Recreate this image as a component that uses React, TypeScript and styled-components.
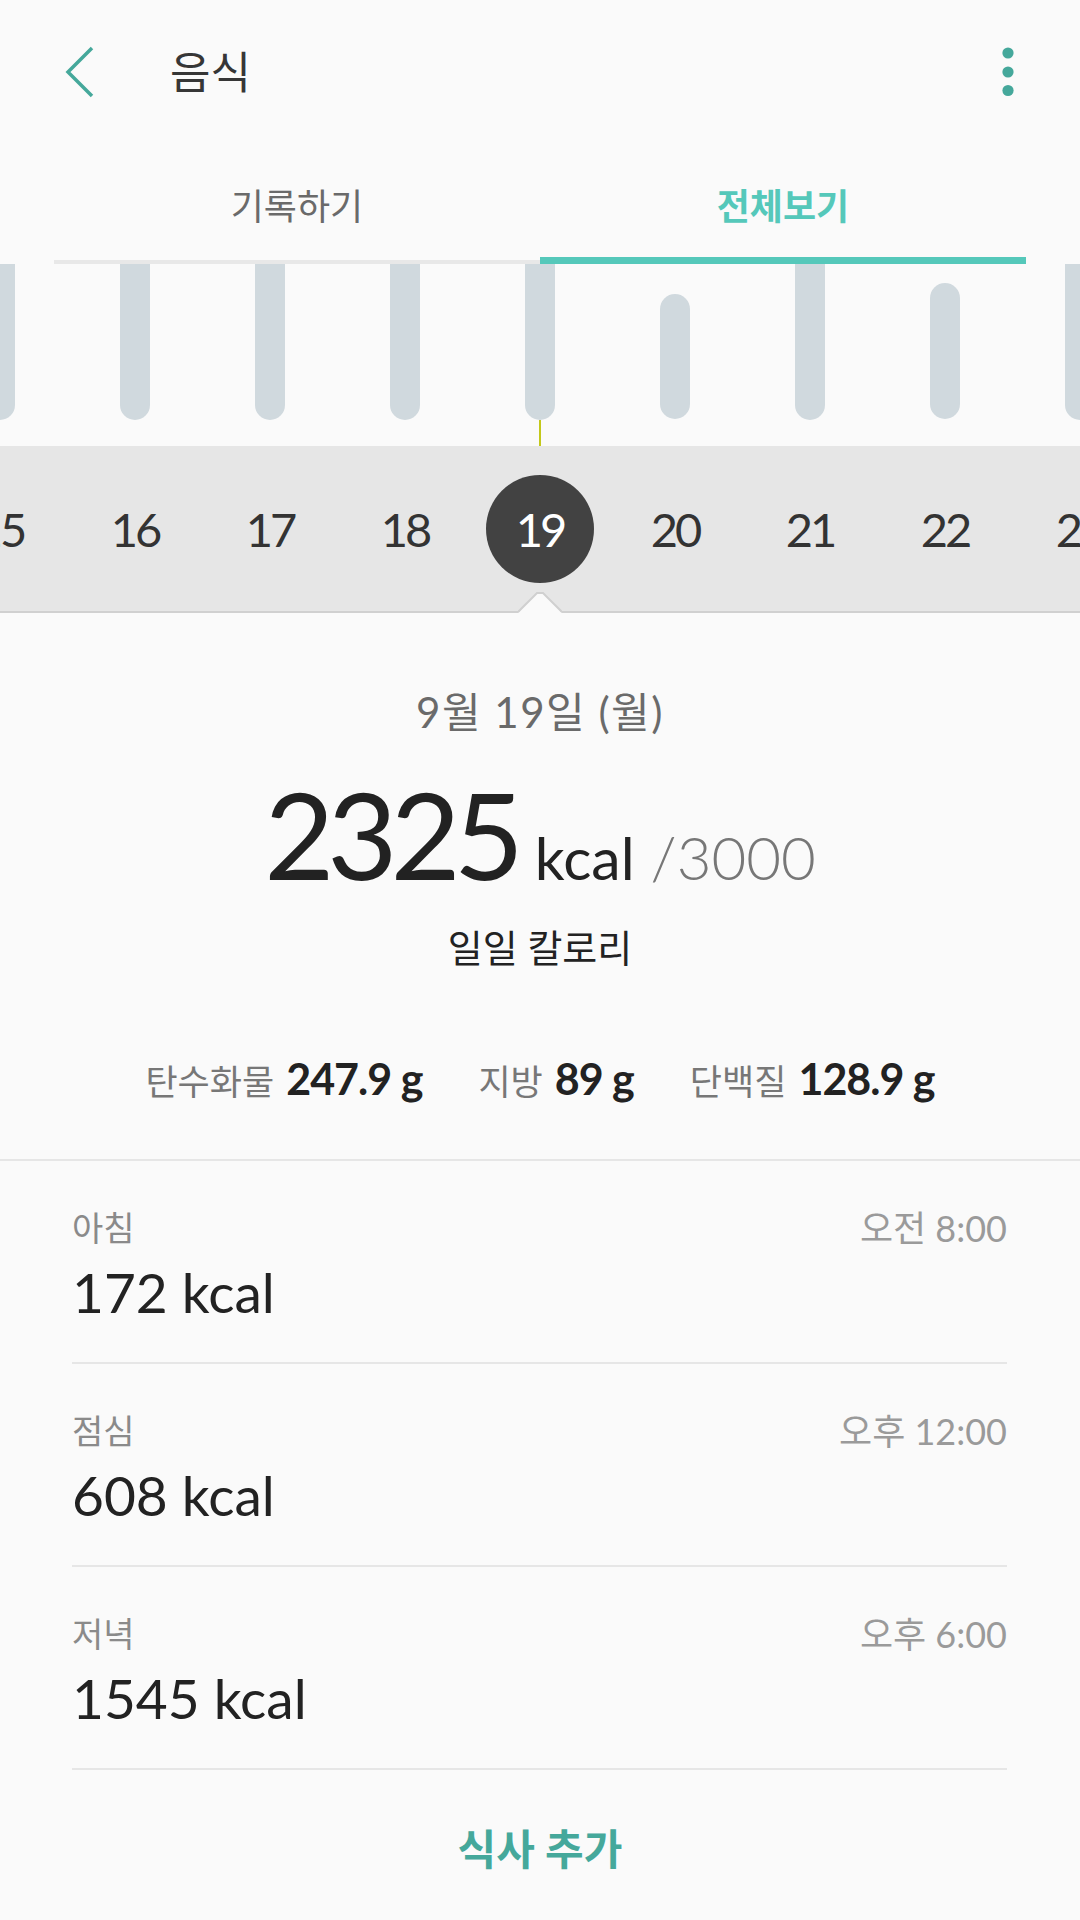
import React from 'react';
import styled, { createGlobalStyle } from 'styled-components';

const TEAL = '#45a89b';
const TEAL_BAR = '#55c8ba';
const FONT = `"Lato", "Noto Sans CJK KR", sans-serif`;

const GlobalStyle = createGlobalStyle`
	html, body {
		margin: 0;
		padding: 0;
		background: #fafafa;
	}
	body {
		font-family: ${FONT};
		color: #222;
	}
	* {
		box-sizing: border-box;
	}
`;

const Screen = styled.div`
	width: 1080px;
	min-height: 1920px;
	background: #fafafa;
	overflow: hidden;
`;

/* header */
const Header = styled.header`
	height: 144px;
	display: flex;
	align-items: center;
	padding-left: 60px;
	padding-right: 66px;
`;

const BackButton = styled.div`
	width: 40px;
	height: 56px;
	display: flex;
	align-items: center;
	justify-content: center;
	svg {
		display: block;
	}
`;

const Title = styled.h1`
	margin: 0 0 0 70px;
	flex: 1;
	font-size: 44px;
	font-weight: 400;
	color: #363636;
	line-height: 56px;
`;

const MoreButton = styled.div`
	width: 12px;
	height: 56px;
	display: flex;
	align-items: center;
`;

/* tabs */
const Tabs = styled.nav`
	display: flex;
	padding: 0 54px;
`;

const Tab = styled.div<{ $active?: boolean }>`
	flex: 1;
	height: 120px;
	padding-top: 40px;
	text-align: center;
	font-size: 36px;
	line-height: 44px;
	font-weight: ${({ $active }) => ($active ? 700 : 400)};
	color: ${({ $active }) => ($active ? TEAL_BAR : '#6a6a6a')};
	border-bottom: ${({ $active }) => ($active ? `7px solid ${TEAL_BAR}` : '4px solid #e8e8e8')};
`;

/* bar chart */
const Chart = styled.div`
	height: 182px;
	display: flex;
	justify-content: center;
	overflow: hidden;
`;

const Slot = styled.div`
	flex: 0 0 135px;
	display: flex;
	flex-direction: column;
	align-items: center;
	justify-content: flex-end;
`;

const Bar = styled.div<{ $h: number; $full?: boolean }>`
	width: 30px;
	height: ${({ $h }) => $h}px;
	background: #d0d9de;
	border-radius: ${({ $full }) => ($full ? '0 0 15px 15px' : '15px')};
`;

const Marker = styled.div<{ $on?: boolean }>`
	width: 2px;
	height: 27px;
	background: ${({ $on }) => ($on ? '#c3c81a' : 'transparent')};
`;

/* date strip */
const Strip = styled.div`
	position: relative;
	height: 167px;
	background: #e6e6e6;
	border-bottom: 2px solid #d0d0d0;
	display: flex;
	justify-content: center;
	align-items: center;
`;

const DaySlot = styled.div`
	flex: 0 0 135px;
	display: flex;
	justify-content: center;
	align-items: center;
`;

const Day = styled.div<{ $selected?: boolean }>`
	width: 108px;
	height: 108px;
	border-radius: 50%;
	display: flex;
	align-items: center;
	justify-content: center;
	font-size: 47px;
	font-weight: 400;
	letter-spacing: -3px;
	color: ${({ $selected }) => ($selected ? '#fff' : '#333')};
	background: ${({ $selected }) => ($selected ? '#424242' : 'transparent')};
`;

const Notch = styled.svg`
	position: absolute;
	left: 50%;
	bottom: -2px;
	transform: translateX(-50%);
	display: block;
`;

/* summary */
const Summary = styled.section`
	display: flex;
	flex-direction: column;
	align-items: center;
	padding-bottom: 52px;
	border-bottom: 2px solid #e6e6e6;
`;

const DateLine = styled.div`
	margin-top: 74px;
	font-size: 42px;
	line-height: 50px;
	letter-spacing: 1.5px;
	color: #6a6a6a;
`;

const TotalRow = styled.div`
	margin-top: 36px;
	display: flex;
	align-items: baseline;
	gap: 18px;
	line-height: 1;
`;

const Total = styled.span`
	font-size: 121px;
	font-weight: 400;
	letter-spacing: -7px;
	color: #222;
`;

const Unit = styled.span`
	font-size: 59px;
	font-weight: 400;
	color: #222;
`;

const Goal = styled.span`
	font-size: 60px;
	font-weight: 300;
	color: #777;
	margin-left: -2px;
`;

const Caption = styled.div`
	margin-top: 30px;
	font-size: 38px;
	line-height: 46px;
	color: #222;
`;

const Macros = styled.div`
	margin-top: 83px;
	display: flex;
	gap: 56px;
	line-height: 52px;
`;

const Macro = styled.div`
	display: flex;
	align-items: baseline;
	gap: 12px;
`;

const MacroLabel = styled.span`
	font-size: 35px;
	color: #777;
`;

const MacroValue = styled.span`
	font-size: 43px;
	font-weight: 700;
	letter-spacing: -1px;
	color: #222;
`;

/* meals */
const MealRow = styled.div`
	margin: 0 73px 0 72px;
	padding-top: 47px;
	height: 203px;
	border-bottom: 2px solid #e6e6e6;
`;

const MealTop = styled.div`
	display: flex;
	justify-content: space-between;
	align-items: center;
	line-height: 40px;
`;

const MealName = styled.span`
	font-size: 34px;
	color: #8a8a8a;
`;

const MealTime = styled.span`
	font-size: 36px;
	color: #9a9a9a;
`;

const MealKcal = styled.div`
	margin-top: 12px;
	font-size: 55px;
	line-height: 64px;
	color: #222;
`;

const AddButton = styled.div`
	margin-top: 54px;
	text-align: center;
	font-size: 42px;
	line-height: 50px;
	font-weight: 700;
	color: ${TEAL};
`;

const days = [
	{ d: 15, h: 160, full: true },
	{ d: 16, h: 160, full: true },
	{ d: 17, h: 160, full: true },
	{ d: 18, h: 160, full: true },
	{ d: 19, h: 160, full: true },
	{ d: 20, h: 125 },
	{ d: 21, h: 160, full: true },
	{ d: 22, h: 136 },
	{ d: 23, h: 160, full: true },
];

const meals = [
	{ name: '아침', time: '오전 8:00', kcal: 172 },
	{ name: '점심', time: '오후 12:00', kcal: 608 },
	{ name: '저녁', time: '오후 6:00', kcal: 1545 },
];

const macros = [
	{ label: '탄수화물', value: '247.9 g' },
	{ label: '지방', value: '89 g' },
	{ label: '단백질', value: '128.9 g' },
];

export default function App() {
	return (
		<Screen>
			<GlobalStyle />
			<Header>
				<BackButton>
					<svg width="30" height="52" viewBox="0 0 30 52">
						<polyline points="27,2 3,26 27,50" fill="none" stroke={TEAL} strokeWidth="3.5" />
					</svg>
				</BackButton>
				<Title>음식</Title>
				<MoreButton>
					<svg width="12" height="50" viewBox="0 0 12 50">
						<circle cx="6" cy="6" r="5.6" fill={TEAL} />
						<circle cx="6" cy="25" r="5.6" fill={TEAL} />
						<circle cx="6" cy="43.5" r="5.6" fill={TEAL} />
					</svg>
				</MoreButton>
			</Header>

			<Tabs>
				<Tab>기록하기</Tab>
				<Tab $active>전체보기</Tab>
			</Tabs>

			<Chart>
				{days.map((x) => (
					<Slot key={x.d}>
						<Bar $h={x.h} $full={x.full} />
						<Marker $on={x.d === 19} />
					</Slot>
				))}
			</Chart>

			<Strip>
				{days.map((x) => (
					<DaySlot key={x.d}>
						<Day $selected={x.d === 19}>{x.d}</Day>
					</DaySlot>
				))}
				<Notch width="44" height="22" viewBox="0 0 44 22">
					<polygon points="0,22 19,2 25,2 44,22" fill="#fafafa" />
					<polyline points="0,21 19,2 25,2 44,21" fill="none" stroke="#d0d0d0" strokeWidth="2" />
				</Notch>
			</Strip>

			<Summary>
				<DateLine>9월 19일 (월)</DateLine>
				<TotalRow>
					<Total>2325</Total>
					<Unit>kcal</Unit>
					<Goal>/3000</Goal>
				</TotalRow>
				<Caption>일일 칼로리</Caption>
				<Macros>
					{macros.map((m) => (
						<Macro key={m.label}>
							<MacroLabel>{m.label}</MacroLabel>
							<MacroValue>{m.value}</MacroValue>
						</Macro>
					))}
				</Macros>
			</Summary>

			{meals.map((m) => (
				<MealRow key={m.name}>
					<MealTop>
						<MealName>{m.name}</MealName>
						<MealTime>{m.time}</MealTime>
					</MealTop>
					<MealKcal>{m.kcal} kcal</MealKcal>
				</MealRow>
			))}

			<AddButton>식사 추가</AddButton>
		</Screen>
	);
}
